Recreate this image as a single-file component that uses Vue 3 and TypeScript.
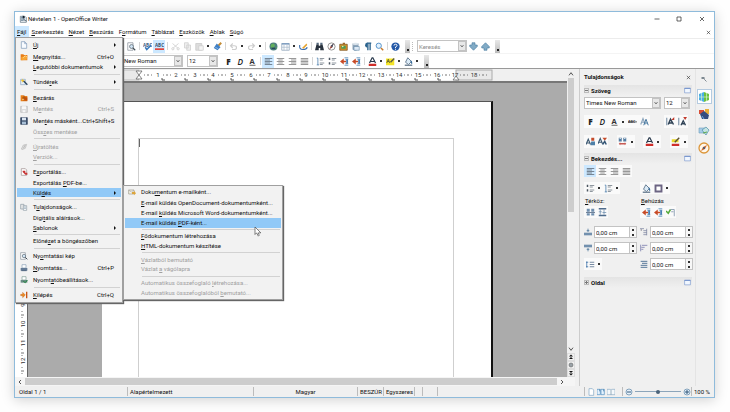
<script setup lang="ts">
import { h, ref } from 'vue'

const icons: Record<string, string> = {
  app: '<path d="M2 2h7l2 2v7H2z" fill="#eef3f7" stroke="#56697a"/><path d="M3 4h5M3 6h6M3 8h4" stroke="#34536e"/><path d="M6 1v4l3-2M7 7l4 2" stroke="#263b4c"/>',
  file: '<path d="M2 1h5l3 3v7H2z" fill="#f8fbff" stroke="#7a96b5"/><path d="M7 1v3h3" fill="none" stroke="#7a96b5"/>',
  open: '<path d="M1 2h4l1 1h5v8H1z" fill="#e77b15"/><path d="M2 6l9-2-1 6-8 1z" fill="#f7a534"/><path d="M5 7l3-3 2 2" stroke="#fff3c0" fill="none"/>',
  wizard: '<path d="M1 2h7v8H1z" fill="#e9f2fb" stroke="#86a1bb"/><path d="M5 4l6 6" stroke="#27425b" stroke-width="2"/><path d="M4 1l1 2 2 1-2 1-1 2-1-2-2-1 2-1z" fill="#f2c230"/>',
  close: '<path d="M1 2h4l1 1h5v8H1z" fill="#e8801a"/><path d="M6 2v8M3 6h6" stroke="#8b3d08" stroke-width="1"/><path d="M7 5h4v5H7z" fill="#c14f10"/><path d="M3 8h3" stroke="#ffe6ae"/>',
  saveoff: '<path d="M1 2h10v9H1z" fill="#dcdcdc" stroke="#b9b9b9"/><path d="M3 2h6v4H3zM4 8h4v3H4z" fill="#f7f7f7"/>',
  save: '<path d="M1 1h10v10H1z" fill="#3d526e" stroke="#2c3d58"/><path d="M3 1h6v4H3z" fill="#dbe5f1"/><path d="M3 7h6v4H3z" fill="#a8bfd6"/>',
  reload: '<path d="M2 9l3-6 5-1-2 6-5 2z" fill="#ddd" stroke="#bbb"/><path d="M5 8l3-5" stroke="#aaa"/>',
  export: '<path d="M2 1h6l2 2v8H2z" fill="#fff" stroke="#9b8b8b"/><path d="M4 4h4v3h3v3H8L4 6z" fill="#c73333"/>',
  props: '<path d="M1 2h5v7H1z" fill="#e9e9e9" stroke="#8b98a3"/><path d="M5 4h5v7H5z" fill="#fff" stroke="#8b98a3"/><path d="M6 6h3M6 8h3" stroke="#8097ab"/>',
  preview: '<path d="M1 1h7v10H1z" fill="#fff" stroke="#89929c"/><circle cx="6" cy="6" r="2.6" fill="#d2e5f5" stroke="#5c6872"/><path d="M8 8l3 3" stroke="#414c55" stroke-width="1.5"/>',
  print: '<path d="M3 1h6v5H3z" fill="#fff" stroke="#8aa0b7"/><path d="M1 6h10v4H1z" fill="#647b96"/><path d="M2 10h8" stroke="#2c4664"/>',
  printset: '<path d="M3 1h6v5H3z" fill="#fff" stroke="#7d9b92"/><path d="M1 6h10v4H1z" fill="#6b8b86"/><path d="M5 8l3 2 3-4" fill="none" stroke="#22883f" stroke-width="1.5"/>',
  exit: '<path d="M9 1h2v10H9z" fill="#c75314"/><path d="M8 6L4 2v3H1v2h3v3z" fill="#f08b1e" stroke="#b3540e" stroke-width=".5"/>',
  mail: '<path d="M1 3h8v6H1z" fill="#f7f3e7" stroke="#9b9788"/><path d="M1 3l4 3 4-3" fill="none" stroke="#aaa"/><path d="M6 6h3V4l3 4-3 3V9H6z" fill="#dca53d"/>',
  spell: '<text x="0" y="6" font-size="6" font-weight="700" font-family="Open Sans" fill="#3a5d82">ABC</text><path d="M3 7l2 3 6-6" stroke="#3978bb" stroke-width="2" fill="none"/>',
  auto: '<text x="0" y="7" font-size="6" font-weight="700" font-family="Open Sans" fill="#33506d">ABC</text><path d="M0 9.500h12" stroke="#e22f22" stroke-width="2" fill="none"/>',
  cut: '<path d="M2 2l7 6M10 2L3 8" stroke="#c9c9c9"/><circle cx="2.5" cy="9" r="1.5" fill="none" stroke="#c9c9c9"/><circle cx="9.5" cy="9" r="1.5" fill="none" stroke="#c9c9c9"/>',
  copy: '<path d="M2 1h5v7H2zM5 4h5v7H5z" fill="#eee" stroke="#cdcdcd"/>',
  paste: '<path d="M1 2h8v9H1z" fill="#ddd" stroke="#c8c8c8"/><path d="M5 5h6v6H5z" fill="#f4f4f4" stroke="#ccc"/>',
  brush: '<path d="M11 1L7 5" stroke="#c38b35" stroke-width="2.500"/><path d="M5 2l5 5-4 4-5-3z" fill="#3f7fc4"/><path d="M3 7l4 2" stroke="#9fc6ee"/>',
  undo: '<path d="M2 5h5q3 0 3 2.500T7 10H4M5 2L2 5l3 3" fill="none" stroke="#cdcdcd" stroke-width="1.5"/>',
  redo: '<path d="M10 5H5Q2 5 2 7.500T5 10h3M7 2l3 3-3 3" fill="none" stroke="#cdcdcd" stroke-width="1.5"/>',
  globe: '<circle cx="6" cy="6" r="5.300" fill="#4e7f81"/><path d="M3 3l3-1 2 2-1 3-3 1-2-2zM8 8l2-2v3z" fill="#63b05d"/><path d="M3.500 8.500h5" stroke="#24485c" stroke-width="2"/>',
  table: '<path d="M1 2h10v9H1z" fill="#fff" stroke="#8fa4ba"/><path d="M1 2.500h10" stroke="#7c9cbf" stroke-width="2"/><path d="M4 4v7M8 4v7M1 7h10" stroke="#a8bacb"/>',
  pencil: '<path d="M1 4q-1 6 4 6t6-3" fill="none" stroke="#3e70af" stroke-width="1.5"/><path d="M4 8l6-6 1 2-5 5z" fill="#e6a22b"/>',
  binoc: '<path d="M2 3h3v2h2V3h3l2 8H7V8H5v3H0z" fill="#29333f"/><path d="M2 1h3v2H2zM7 1h3v2H7z" fill="#546a80"/>',
  compass: '<circle cx="6" cy="6" r="4.800" fill="#fff" stroke="#777"/><path d="M9 2L7 7 3 10l2-5z" fill="#9c4d45"/><path d="M9 2L7 7 5 5z" fill="#3b4f66"/>',
  gallery: '<path d="M1 3h10v8H1z" fill="#dc9428" stroke="#7a501b"/><path d="M3 5h6v4H3z" fill="#4f9a55"/><path d="M5 1h3v2H5z" fill="#9b6527"/><circle cx="5" cy="6" r="1" fill="#eef6b7"/>',
  db: '<path d="M2 2h8v8q-4 3-8 0z" fill="#90a6ba"/><ellipse cx="6" cy="2.500" rx="4" ry="1.500" fill="#dce5ec"/><path d="M4 6h7v5H4z" fill="#dce9f5" stroke="#557c9e" stroke-width=".7"/>',
  pilcrow: '<path d="M6.500 1v10M9.500 1v10M11 1.500H5" stroke="#2b638e" stroke-width="1.800"/><path d="M6 1a3.300 3.300 0 0 0 0 6.600z" fill="#2b638e"/>',
  zoom: '<circle cx="5" cy="5" r="3.500" fill="#e2f2ff" stroke="#5793c8" stroke-width="1.300"/><path d="M8 8l3 3" stroke="#c8792a" stroke-width="2"/>',
  help: '<circle cx="6" cy="6" r="5.500" fill="#2459a7"/><path d="M4 4.800Q4 3 6 3t2 1.700Q8 6 6 6.700V8" fill="none" stroke="#fff" stroke-width="1.300"/><path d="M5.400 9h1.300v1.300H5.400z" fill="#fff"/>',
  down: '<path d="M4 1h4v3h3v2l-5 5-5-5V4h3z" fill="#82abc6" stroke="#44799f" stroke-width=".8"/>',
  up: '<path d="M4 11h4V8h3V6L6 1 1 6v2h3z" fill="#82abc6" stroke="#44799f" stroke-width=".8"/>',
  left: '<path d="M1 2h10M1 4h7M1 6h10M1 8h7M1 10h10" stroke="#5b6671"/>',
  center: '<path d="M1 2h10M3 4h6M1 6h10M3 8h6M1 10h10" stroke="#777"/>',
  right: '<path d="M1 2h10M4 4h7M1 6h10M4 8h7M1 10h10" stroke="#777"/>',
  justify: '<path d="M1 2h10M1 4h10M1 6h10M1 8h10M1 10h10" stroke="#777"/>',
  numlist: '<path d="M5 2h6M5 4h4M5 8h6M5 10h4" stroke="#6b7680"/><path d="M1 1.500h1.500v9M1 10.500h3" fill="none" stroke="#4176a8"/>',
  bullist: '<path d="M5 2h6M5 4h4M5 8h6M5 10h4" stroke="#6b7680"/><path d="M1 1h2v3H1zM1 7h2v3H1z" fill="#4b555f"/>',
  outdent: '<path d="M6 1h5M7 3h4M7 9h4M6 11h5" stroke="#4a80b3"/><path d="M8 5H5V2L0 6l5 4V7h3z" fill="#c74a26"/><path d="M9.500 3v6" stroke="#4a80b3" stroke-width="2.500"/>',
  font: '<path d="M2 8L5.500 1h1L10 8M3.500 6h5" stroke="#28384b" stroke-width="1.600" fill="none"/><path d="M1 9h10v3H1z" fill="#cf2d29"/>',
  mark: '<path d="M0 2h11v9H0z" fill="#f5e528"/><path d="M1 8l2-5 2 5M2 6h2" stroke="#4b4c2f" fill="none"/><path d="M6 7l5-5" stroke="#5a5b46" stroke-width="2"/>',
  mark2: '<path d="M1 3h9v4H1z" fill="#ead92a"/><path d="M5 7l6-6" stroke="#5a4f35" stroke-width="2"/><path d="M1 9h10v3H1z" fill="#cf2d29"/>',
  fill: '<path d="M2 7l3-6 5 5-4 4z" fill="#dcebf7" stroke="#455f77"/><path d="M9 5q2 3 1 4" stroke="#2c6699" stroke-width="1.500" fill="none"/><path d="M1 11h10" stroke="#76889a" stroke-width="2"/>',
  strike: '<text x="0" y="8" font-size="5" font-weight="700" font-family="Open Sans" fill="#444">ABC</text><path d="M0 6.500h12" stroke="#333"/>',
  shadow: '<path d="M1 10L4 2l3 8M2 7h4" stroke="#8da6bd" stroke-width="1.500" fill="none"/><path d="M5 11l3-8 3 8M6 8h4" stroke="#47779f" stroke-width="1.300" fill="none"/>',
  grow: '<path d="M1 1v10" stroke="#7d93a8" stroke-width="1.500"/><path d="M3 10l3-7 4 7M4 8h4" stroke="#2f4255" stroke-width="2" fill="none"/><path d="M7 4l4-4v4z" fill="#c0392b"/>',
  shrink: '<path d="M1 1v10" stroke="#7d93a8" stroke-width="1.500"/><path d="M4 11l3-6 3 6M5 9h4" stroke="#2f4255" stroke-width="1.700" fill="none"/><path d="M7 0h5L9.500 4z" fill="#c0392b"/>',
  sup: '<path d="M0 10l3-7 3 7M1 8h4" stroke="#3d5972" stroke-width="1.500" fill="none"/><path d="M7 1h4v4H7z" fill="#c44b2b"/><path d="M7 6h5v5H6z" fill="#4e80a8"/>',
  sub: '<path d="M0 9l3-7 3 7M1 7h4" stroke="#3d5972" stroke-width="1.500" fill="none"/><path d="M6 1h6L9 5z" fill="#c44b2b"/><path d="M6 10l3-4 2 4" stroke="#355777" stroke-width="2" fill="none"/>',
  spacing: '<path d="M1 1h4v5H1zM7 1h4v5H7z" fill="#547ca1"/><path d="M2 2h2M8 2h2" stroke="#fff"/><path d="M1 9l2-2v1h6V7l2 2-2 2v-1H3v1z" fill="#c75b55"/>',
  border: '<path d="M2 2h8v8H2z" fill="#fff" stroke="#6c6583" stroke-width="2.500"/>',
  paraup: '<path d="M1 1h4v4H1zM7 1h4v4H7zM1 7h4v3H1zM7 7h4v3H7z" fill="#6f8faf"/><path d="M0 6h12" stroke="#445b78"/>',
  paradown: '<path d="M1 1h10M1 10h10" stroke="#4e6b8c" stroke-width="2"/><path d="M3 2v7M8 2v7M1 5h4M6 6h5" stroke="#6f8faf"/>',
  hang: '<path d="M0 4l3 3 3-5" stroke="#55aa3a" stroke-width="2" fill="none"/><path d="M6 2h5v9M7 5h3" stroke="#738aa3" fill="none"/>',
  above: '<path d="M0 7h12v4H0z" fill="#7290ae"/><path d="M6 1v5M4 4h4" stroke="#35658e"/>',
  below: '<path d="M0 1h12v4H0z" fill="#7290ae"/><path d="M6 6v5M4 8h4" stroke="#35658e"/>',
  inbefore: '<path d="M0 1h6M10 1v10M5 4h5M5 7h5M5 10h5" stroke="#6c7695"/><path d="M1 3h2" stroke="#334"/>',
  inafter: '<path d="M1 1v10M3 2h8M2 5h5M2 8h3" stroke="#6267a0"/>',
  infirst: '<path d="M1 2h10M3 5h8M1 8h10M1 11h10" stroke="#58799b" stroke-width="1.500"/>',
  linesp: '<path d="M1 2v8M0 3h3M0 9h3" stroke="#366ba4"/><path d="M5 3h6M5 6h6M5 9h6" stroke="#687e98" stroke-width="1.200"/>',
  deck: '<path d="M5 4l2 3 4 4" stroke="#5d6974" stroke-width="1.500" fill="none"/><path d="M1 2h6v4H1z" fill="#7d8890"/>',
  cube: '<path d="M1 3l5-2v10l-5-2z" fill="#4aaee5"/><path d="M6 1l5 2v6l-5 2z" fill="#6cc13e"/><path d="M1 6h10M3.500 2v8M8.500 2v8" stroke="#d2efcd" stroke-width=".7"/>',
  styles: '<path d="M1 2h5v4H1z" fill="#d74e36"/><path d="M7 1h4v5H7z" fill="#e9af39"/><path d="M2 6l4-3 5 4-1 4H4z" fill="#354d80"/><path d="M4 8l2 3" stroke="#6aa6dd"/>',
  pics: '<path d="M1 3h6v5H1z" fill="#a7cbe8" stroke="#6b9fbb" stroke-width=".6"/><path d="M4 5l4-3 3 3-3 5z" fill="#c4e4e2" stroke="#4d8eaa" stroke-width=".7"/><path d="M5 8l4-1" stroke="#5fa94c"/>',
  nav: '<circle cx="6" cy="6" r="5" fill="#fff8ec" stroke="#dc963a" stroke-width="1.300"/><path d="M9 3L7 7 3 9l2-4z" fill="#cf6b36"/><circle cx="6" cy="6" r="1" fill="#35577a"/>',
  page1: '<path d="M3 1h5l2 2v8H3z" fill="#fff" stroke="#7ba3c3"/>',
  page2: '<path d="M0 2h5v8H0zM6 2h5v8H6z" fill="#e3f2fe" stroke="#4f8dbe"/><path d="M4 2v3M10 2v3" stroke="#306c9b"/>',
  book: '<path d="M0 2h5l1 1 1-1h5v8H0z" fill="#f4f8fb" stroke="#89a9c2"/><path d="M6 3v7" stroke="#6e8ba2"/>',
  minus: '<circle cx="6" cy="6" r="4.500" fill="#e5f1fb" stroke="#527b9f"/><path d="M3 6h6" stroke="#274d70" stroke-width="1.400"/>',
  plus: '<circle cx="6" cy="6" r="4.500" fill="#e5f1fb" stroke="#527b9f"/><path d="M3 6h6M6 3v6" stroke="#274d70" stroke-width="1.400"/>',
  chevup: '<path d="M3 8l3-4 3 4" fill="none" stroke="#555" stroke-width="1.500"/>',
  chevdown: '<path d="M3 4l3 4 3-4" fill="none" stroke="#555" stroke-width="1.500"/>',
  chevleft: '<path d="M8 2L4 6l4 4" fill="none" stroke="#444" stroke-width="1.800"/>',
  chevright: '<path d="M4 2l4 4-4 4" fill="none" stroke="#444" stroke-width="1.800"/>',
  dblup: '<path d="M6 1l4 4H2zM6 6l4 4H2z" fill="#111"/>',
  dbldown: '<path d="M6 11l4-4H2zM6 6l4-4H2z" fill="#111"/>',
  dot: '<circle cx="6" cy="6" r="4" fill="#9aa2a8" stroke="#555"/>',
  x: '<path d="M2 2l8 8M10 2l-8 8" stroke="#333" stroke-width="1.500"/>',
  min: '<path d="M1 6h10" stroke="#333" stroke-width="1.500"/>',
  max: '<path d="M2 2h8v8H2z" fill="none" stroke="#333" stroke-width="1.500"/>',
  more: '<path d="M1 2h10v8H1z" fill="#f1f7ff" stroke="#6f8fca"/><path d="M1 2.500h10" stroke="#6f8fca" stroke-width="1.500"/>',
  F: '<text x="3" y="10" font-size="11" font-weight="800" font-family="Open Sans" fill="#222">F</text>',
  D: '<text x="2" y="10" font-size="11" font-style="italic" font-weight="600" font-family="Open Sans" fill="#222">D</text>',
  A: '<text x="2" y="9" font-size="10" font-weight="700" font-family="Open Sans" fill="#333">A</text><path d="M2 11h8" stroke="#333"/>',
}

const Icon = (p: { n: string }) =>
  h('svg', { class: 'icon', viewBox: '0 0 12 12', 'aria-hidden': 'true', innerHTML: icons[p.n] })
Icon.props = ['n']

/* An underscore marks the accelerator letter that follows it. */
const Label = (p: { t: string }) => {
  const i = p.t.indexOf('_')
  return i < 0 ? h('span', p.t) : h('span', [p.t.slice(0, i), h('u', p.t[i + 1]), p.t.slice(i + 2)])
}
Label.props = ['t']

interface Item { t?: string; icon?: string; tall?: boolean; key?: string; off?: boolean; sub?: boolean; on?: boolean }
const sep: Item = {}
const fileMenu: Item[] = [
  { t: '_Új', icon: 'file', tall: true, sub: true },
  { t: '_Megnyitás...', icon: 'open', tall: true, key: 'Ctrl+O' },
  { t: '_Legutóbbi dokumentumok', sub: true },
  sep,
  { t: 'Tündé_rek', icon: 'wizard', tall: true, sub: true },
  sep,
  { t: '_Bezárás', icon: 'close', tall: true },
  { t: 'M_entés', icon: 'saveoff', tall: true, key: 'Ctrl+S', off: true },
  { t: 'Men_tés másként...', icon: 'save', tall: true, key: 'Ctrl+Shift+S' },
  { t: 'Öss_zes mentése', off: true },
  sep,
  { t: '_Újratöltés', icon: 'reload', tall: true, off: true },
  { t: '_Verziók...', off: true },
  sep,
  { t: 'E_xportálás...', icon: 'export', tall: true },
  { t: 'Exportálás _PDF-be...' },
  { t: 'Kül_dés', sub: true, on: true },
  sep,
  { t: 'T_ulajdonságok...', icon: 'props', tall: true },
  { t: 'Digi_tális aláírások...' },
  { t: '_Sablonok', sub: true },
  sep,
  { t: 'Előné_zet a böngészőben' },
  sep,
  { t: 'Ny_omtatási kép', icon: 'preview', tall: true },
  { t: '_Nyomtatás...', icon: 'print', tall: true, key: 'Ctrl+P' },
  { t: 'Nyomt_atóbeállítások...', icon: 'printset', tall: true },
  sep,
  { t: '_Kilépés', icon: 'exit', tall: true, key: 'Ctrl+Q' },
]
const sendMenu: Item[] = [
  { t: 'Doku_mentum e-mailként...', icon: 'mail', tall: true },
  { t: '_E-mail küldés OpenDocument-dokumentumként...' },
  { t: 'E-mail _küldés Microsoft Word-dokumentumként...' },
  { t: 'E-mail küldés _PDF-ként...', on: true },
  sep,
  { t: '_Fődokumentum létrehozása' },
  { t: '_HTML-dokumentum készítése' },
  sep,
  { t: '_Vázlatból bemutató', off: true },
  { t: 'Vázlat _a vágólapra', off: true },
  sep,
  { t: 'Automatikus összefoglaló _létrehozása...', off: true },
  { t: 'Automatikus összefoglalóból _bemutató...', off: true },
]
const menus = ['_Szerkesztés', '_Nézet', '_Beszúrás', 'F_ormátum', '_Táblázat', '_Eszközök', '_Ablak', '_Súgó']

/* Toolbar tokens: "|" is a divider, "v" a drop-down mark, "*" a pressed button. */
const standard = 'preview | spell *auto | cut copy paste v brush | undo v redo v | globe table v pencil | binoc compass gallery db pilcrow zoom | help'.split(' ')
const formatting = 'F D A | *left center right justify | numlist bullist outdent outdent | font v mark v fill v'.split(' ')
const rows = {
  text1: [['F', 'D', 'A', 'v', 'strike', 'shadow'], ['grow', 'shrink']],
  text2: [['sup', 'sub'], ['spacing', 'v'], ['font', 'v'], ['mark2', 'v']],
  para: [['bullist', 'v', 'numlist', 'v'], ['fill', 'border', 'v']],
}
const spins = [
  { icon: 'above', label: 'Térköz' },
  { icon: 'inbefore', label: 'Behúzás' },
  { icon: 'below', label: 'Térköz' },
  { icon: 'inafter', label: 'Behúzás' },
]
const cm = 18.6
const origin = 111
const at = (n: number) => Math.round(origin + n * cm)
const down = (n: number) => Math.round(55 + n * cm)
const tabs = Array.from({ length: 13 }, (_, i) => origin + 23 * (i + 1))
const dots = Array.from({ length: 19 }, (_, i) => i)
const zoomLevel = ref(50)
const searchText = ref('')
</script>

<template>
  <main class="window">
    <header class="title">
      <Icon n="app" /><h1>Névtelen 1 - OpenOffice Writer</h1>
      <button aria-label="min"><Icon n="min" /></button>
      <button aria-label="max"><Icon n="max" /></button>
      <button aria-label="x"><Icon n="x" /></button>
    </header>

    <nav class="menubar">
      <div class="menu-root">
        <button class="menu-head open"><Label t="_Fájl" /></button>
        <div class="menu file" role="menu">
          <template v-for="(m, i) in fileMenu" :key="i">
            <hr v-if="!m.t">
            <div v-else class="row" :class="{ tall: m.tall }">
              <button class="item" role="menuitem" :class="{ on: m.on }" :disabled="m.off">
                <Icon v-if="m.icon" :n="m.icon" /><Label class="name" :t="m.t" />
                <kbd v-if="m.key">{{ m.key }}</kbd><i v-if="m.sub" class="arrow"></i>
              </button>
              <div v-if="m.on" class="menu send" role="menu">
                <template v-for="(s, j) in sendMenu" :key="j">
                  <hr v-if="!s.t">
                  <div v-else class="row" :class="{ tall: s.tall }">
                    <button class="item" role="menuitem" :class="{ on: s.on }" :disabled="s.off">
                      <Icon v-if="s.icon" :n="s.icon" /><Label class="name" :t="s.t" />
                    </button>
                  </div>
                </template>
                <svg class="cursor" viewBox="0 0 8 12"><path d="M1 0v9l2-2 2 4 1-1-1-3h3z" fill="#fff" stroke="#444" stroke-width=".8" /></svg>
              </div>
            </div>
          </template>
        </div>
      </div>
      <button v-for="m in menus" :key="m" class="menu-head"><Label :t="m" /></button>
      <button class="doc-close" aria-label="x"><Icon n="x" /></button>
    </nav>

    <div class="toolbar first">
      <template v-for="(t, i) in standard" :key="i">
        <i v-if="t === '|'" class="divider"></i><i v-else-if="t === 'v'" class="drop"></i>
        <button v-else class="tool" :class="{ pressed: t[0] === '*' }" :aria-label="t"><Icon :n="t.replace('*', '')" /></button>
      </template>
      <i class="overflow"></i><i class="grip"></i>
      <div class="combo search">
        <input v-model="searchText" aria-label="Keresés" placeholder="Keresés"><i class="pick"><Icon n="chevdown" /></i>
      </div>
      <button class="tool" aria-label="down"><Icon n="down" /></button>
      <button class="tool" aria-label="up"><Icon n="up" /></button>
      <i class="overflow"></i>
    </div>

    <div class="toolbar second">
      <div class="combo family"><select aria-label="Times New Roman"><option>Times New Roman</option></select><i class="pick"><Icon n="chevdown" /></i></div>
      <div class="combo size"><select aria-label="12"><option>12</option></select><i class="pick"><Icon n="chevdown" /></i></div>
      <template v-for="(t, i) in formatting" :key="i">
        <i v-if="t === '|'" class="divider"></i><i v-else-if="t === 'v'" class="drop"></i>
        <button v-else class="tool" :class="{ pressed: t[0] === '*' }" :aria-label="t"><Icon :n="t.replace('*', '')" /></button>
      </template>
      <i class="overflow"></i>
    </div>

    <div class="body">
      <section class="editor">
        <div class="hruler">
          <svg width="465" height="13">
            <rect x="0" y="1" width="111" height="10" fill="#e9e9e9" stroke="#bbb" />
            <rect x="111" y="1" width="317" height="10" fill="#fff" />
            <rect x="428" y="1" width="36" height="10" fill="#e9e9e9" stroke="#aaa" />
            <path v-for="d in dots" :key="'d' + d" :d="`M${at(d) + 5} 6h1m3 -1v2m3 -1h1`" stroke="#777" />
            <path v-for="x in tabs" :key="'t' + x" :d="`M${x} 9v2h3`" stroke="#555" fill="none" />
            <text v-for="n in 18" :key="n" :x="at(n)" y="8" text-anchor="middle">{{ n }}</text>
            <path d="M108 2h6l-3 4zM108 10h6l-3-4z" fill="#fff" stroke="#666" stroke-width=".8" />
            <path d="M425 11h6l-3-4z" fill="#fff" stroke="#666" stroke-width=".8" />
          </svg>
        </div>
        <div class="vruler">
          <svg width="14" height="296">
            <template v-for="n in 12" :key="n">
              <text x="0" y="0" :transform="`translate(10 ${down(n)}) rotate(-90)`" text-anchor="middle">{{ n }}</text>
              <path :d="`M7 ${down(n) + 6}v1m-1 3h3m-2 2v1`" stroke="#777" />
            </template>
          </svg>
        </div>
        <div class="workspace"><article class="page"><div class="textarea"></div></article></div>
        <div class="vscroll">
          <Icon n="chevup" /><div class="thumb"></div><div class="rest"></div>
          <Icon n="chevdown" />
          <button aria-label="dblup"><Icon n="dblup" /></button>
          <button aria-label="dot"><Icon n="dot" /></button>
          <button aria-label="dbldown"><Icon n="dbldown" /></button>
        </div>
        <div class="hscroll"><Icon n="chevleft" /><div class="thumb"></div><Icon n="chevright" /></div>
      </section>

      <aside class="sidebar">
        <div class="panel">
          <div class="panel-title"><h2>Tulajdonságok</h2><button aria-label="x"><Icon n="x" /></button></div>
          <div class="section-head"><i class="fold"></i><h3>Szöveg</h3><Icon n="more" /></div>
          <div class="section text">
            <div class="line">
              <div class="combo wide"><select aria-label="Times New Roman"><option>Times New Roman</option></select><i class="pick"><Icon n="chevdown" /></i></div>
              <div class="combo narrow"><select aria-label="12"><option>12</option></select><i class="pick"><Icon n="chevdown" /></i></div>
            </div>
            <div v-for="(r, k) in [rows.text1, rows.text2]" :key="k" class="line spread">
              <div v-for="(g, i) in r" :key="i" class="group">
                <template v-for="(t, j) in g" :key="j">
                  <i v-if="t === 'v'" class="drop"></i>
                  <button v-else class="tool" :aria-label="t"><Icon :n="t" /></button>
                </template>
              </div>
            </div>
          </div>
          <div class="section-head"><i class="fold"></i><h3>Bekezdés...</h3><Icon n="more" /></div>
          <div class="section para">
            <div class="line">
              <div class="group">
                <button v-for="a in ['left', 'center', 'right', 'justify']" :key="a" class="tool" :class="{ pressed: a === 'left' }" :aria-label="a"><Icon :n="a" /></button>
              </div>
            </div>
            <div class="line halves lists">
              <div v-for="(g, i) in rows.para" :key="i" class="group">
                <template v-for="(t, j) in g" :key="j">
                  <i v-if="t === 'v'" class="drop"></i>
                  <button v-else class="tool" :aria-label="t"><Icon :n="t" /></button>
                </template>
              </div>
            </div>
            <div class="line halves captions"><span><Label t="_Térköz:" /></span><span><Label t="_Behúzás" /></span></div>
            <div class="line halves">
              <div class="group"><button v-for="t in ['paraup', 'paradown']" :key="t" class="tool" :aria-label="t"><Icon :n="t" /></button></div>
              <div class="group"><button v-for="(t, i) in ['outdent', 'outdent', 'hang']" :key="i" class="tool" :aria-label="t"><Icon :n="t" /></button></div>
            </div>
            <div class="spins">
              <label v-for="(s, i) in spins" :key="i" class="spin">
                <Icon :n="s.icon" /><input :aria-label="s.label" value="0,00 cm"><i class="steps"></i>
              </label>
              <div class="group"><button class="tool" aria-label="linesp"><Icon n="linesp" /></button><i class="drop"></i></div>
              <label class="spin"><Icon n="infirst" /><input aria-label="Behúzás" value="0,00 cm"><i class="steps"></i></label>
            </div>
          </div>
          <div class="section-head"><i class="fold closed"></i><h3>Oldal</h3><Icon n="more" /></div>
        </div>
        <div class="tabs">
          <button v-for="t in ['deck', 'cube', 'styles', 'pics', 'nav']" :key="t" :class="{ current: t === 'cube' }" :aria-label="t"><Icon :n="t" /></button>
        </div>
      </aside>
    </div>

    <footer class="status">
      <span class="c-page">Oldal 1 / 1</span><span class="c-style">Alapértelmezett</span>
      <span class="c-lang">Magyar</span><span class="c-ins">BESZÚR</span><span class="c-sel">Egyszeres</span>
      <span class="c-a"></span><span class="c-b"></span><span class="c-rest"></span>
      <span class="c-view"><Icon n="page1" /><Icon n="page2" /><Icon n="book" /></span>
      <span class="c-zoom"><Icon n="minus" /><input v-model="zoomLevel" type="range" aria-label="100 %"><Icon n="plus" /></span>
      <span class="c-pct">100 %</span>
    </footer>
  </main>
</template>

<style>
body { background: #fefefe; }
</style>

<style scoped>
* { box-sizing: border-box; }
.window {
  display: flex;
  flex-direction: column;
  height: calc(100vh - 25px);
  margin: 11px 15px 14px 14px;
  border: 1px solid #8fbbdb;
  background: #fff;
  box-shadow: 0 2px 12px rgba(0, 0, 0, .18);
  color: #111;
  font: 6px/10px Roboto, "Open Sans", sans-serif;
}
button, input, select { font: inherit; color: inherit; margin: 0; padding: 0; border: 0; background: none; border-radius: 0; }
h1, h2, h3 { margin: 0; font: inherit; }
u { text-decoration-thickness: 1px; text-underline-offset: 1px; }
.icon { display: block; flex: none; width: 8px; height: 8px; }

.title { display: flex; align-items: center; height: 14px; padding: 0 8px 0 4px; }
.title h1 { flex: 1; margin-left: 1px; }
.title button { width: 22px; height: 12px; display: grid; place-items: center; }
.title button .icon { width: 6px; height: 6px; }
.title button:last-child { width: 8px; margin-left: 8px; }

.menubar { display: flex; height: 12px; }
.menu-root { position: relative; }
.menu-head { height: 12px; padding: 0 3px 0 2px; white-space: nowrap; }
.menu-head.open { background: #cce8ff; }
.doc-close { margin: 0 3px 0 auto; }
.doc-close .icon { width: 5px; height: 5px; }

.menu {
  position: absolute;
  z-index: 5;
  display: flex;
  flex-direction: column;
  padding: 1px;
  background: #f2f2f2;
  border: 1px solid #a0a0a0;
  box-shadow: 1px 1px 1px #666;
}
.menu.file { top: 11px; left: 0; width: 108px; height: 266px; }
.menu.send { top: -3px; left: 106px; width: 160px; height: 115px; }
.row { position: relative; flex: 10 1 0; min-height: 0; }
.row.tall { flex-grow: 12; }
.item { position: relative; display: flex; align-items: center; width: 100%; height: 100%; padding: 0 7px 0 3px; text-align: left; white-space: nowrap; }
.item .name { flex: 1; }
.item > .name:first-child { padding-left: 13px; }
.item .icon + .name { padding-left: 5px; }
.item.on { background: #91c9f7; }
.item:disabled { color: #a0a0a0; }
.item kbd { font: inherit; }
.arrow { border: solid transparent; border-width: 2px 0 2px 2px; border-left-color: #111; margin-right: -2px; }
.menu hr { flex: 4 1 0; min-height: 0; width: calc(100% - 18px); margin: 0 0 0 17px; border: 0; background: linear-gradient(#d2d2d2, #d2d2d2) center / 100% 1px no-repeat; }
.cursor { position: absolute; right: 21px; bottom: 62px; width: 7px; height: 10px; }

.toolbar { display: flex; align-items: center; height: 15px; border-top: 1px solid #ececec; }
.toolbar.first { padding-left: 110px; }
.toolbar.second { padding-left: 89px; border-top-color: #f4f4f4; }
.tool { display: grid; place-items: center; width: 12px; height: 12px; flex: none; }
.tool.pressed { background: #cce8ff; }
.toolbar .icon { width: 9px; height: 9px; }
.toolbar .tool { height: 13px; }
.divider { width: 1px; height: 8px; margin: 0 1px 0 2px; background: #d6d6d6; flex: none; }
.drop { flex: none; width: 6px; height: 2px; background: linear-gradient(#333, #333) center / 2px 2px no-repeat; }
.overflow { width: 5px; height: 13px; margin-left: 4px; background: linear-gradient(#222, #222) 2px 9px / 2px 2px no-repeat, linear-gradient(#e8e8e8, #bbb); flex: none; }
.grip { width: 2px; height: 9px; margin: 0 3px 0 2px; border-left: 1px dotted #bbb; }

.combo { position: relative; display: flex; height: 12px; border: 1px solid #c3c3c3; background: #fff; flex: none; }
.combo select, .combo input { flex: 1; width: 0; height: 100%; padding-left: 1px; appearance: none; outline: 0; }
.combo input::placeholder { color: #8a8a8a; opacity: 1; }
.pick { display: grid; place-items: center; width: 8px; background: #e8e8e8; border: 1px solid #c3c3c3; pointer-events: none; }
.pick .icon { width: 6px; height: 6px; }
.family { width: 79px; }
.size { width: 31px; margin: 0 4px; }
.search { width: 50px; }

.body { display: flex; flex: 1; min-height: 0; border-top: 1px solid #999; }
.editor { display: grid; grid-template: 14px 1fr 9px / 13px 1fr 8px; flex: 1; min-width: 0; background: #f0f0f0; }
.hruler { grid-column: 1 / 3; border-bottom: 2px solid #777; overflow: hidden; display: flex; justify-content: flex-end; padding-right: 74px; }
.hruler svg, .vruler svg { display: block; flex: none; }
.hruler text, .vruler text { font-size: 6px; fill: #333; }
.vruler { grid-area: 2 / 1; overflow: hidden; background: #fff; border-right: 1px solid #666; }
.workspace { grid-area: 2 / 2; display: flex; justify-content: center; padding-top: 18px; background: #ababab; overflow: hidden; }
.page { width: 391px; padding: 36px 37px 0 36px; background: #fff; border: solid #555; border-width: 1px 2px 0 0; border-right-color: #111; }
.textarea { height: 100%; border: 1px solid #cfcfcf; border-bottom: 0; background: linear-gradient(#666, #666) 0 0 / 1px 8px no-repeat; }
.vscroll { grid-area: 1 / 3 / 3 / 4; display: flex; flex-direction: column; align-items: center; padding-top: 1px; }
.vscroll .thumb { width: 6px; flex: 1; background: #cdcdcd; }
.vscroll .rest { flex: 1; }
.vscroll button { width: 8px; height: 8px; display: grid; place-items: center; border: 1px solid #ddd; }
.vscroll button .icon { width: 6px; height: 6px; }
.hscroll { grid-area: 3 / 1 / 4 / 4; display: flex; align-items: center; padding-right: 8px; background: #f5f5f5; }
.hscroll .icon { width: 6px; height: 6px; margin: 0 2px; }
.hscroll .thumb { flex: 1; height: 7px; background: #cdcdcd; }

.sidebar { display: flex; width: 139px; padding-left: 4px; background: #f0f0f0; }
.panel { flex: 1; min-width: 0; padding: 0 3px 0 4px; border-left: 1px solid #ccc; }
.panel-title { display: flex; align-items: center; justify-content: space-between; height: 16px; padding: 0 1px 0 0; font-weight: 700; }
.panel-title .icon { width: 5px; height: 5px; }
.section-head { display: flex; align-items: center; gap: 2px; height: 11px; padding: 0 1px 0 0; font-weight: 700; background: linear-gradient(#e4e4e4, #f0f0f0); }
.section-head h3 { flex: 1; }
.section-head .icon { width: 7px; height: 7px; }
.fold { width: 5px; height: 5px; border: 1px solid #bbb; background: linear-gradient(#777, #777) center / 3px 1px no-repeat; }
.fold.closed { background: linear-gradient(#777, #777) center / 3px 1px no-repeat, linear-gradient(#777, #777) center / 1px 3px no-repeat; }
.section { padding: 1px 2px 0 0; }
.line { display: flex; gap: 3px; }
.line.spread { justify-content: space-between; margin-top: 6px; padding-right: 2px; }
.line.spread + .line.spread { margin-top: 7px; }
.section.text { padding-bottom: 5px; }
.wide { flex: 1; }
.narrow { width: 26px; }
.group { display: flex; align-items: center; height: 13px; background: #fafafa; }
.panel .tool .icon { width: 9px; height: 9px; }
.halves { display: grid; grid-template-columns: 56px 1fr; gap: 0; justify-items: start; }
.lists { margin-top: 5px; }
.captions { margin-top: 2px; padding-left: 1px; }
.section.para { padding-top: 1px; padding-bottom: 7px; }
.section.para .group { height: 12px; }
.spins { display: grid; grid-template-columns: 53px 1fr; gap: 4px 3px; justify-items: start; margin-top: 8px; }
.spin { display: flex; align-items: center; width: 53px; height: 12px; }
.spin input { flex: 1; width: 0; height: 12px; margin-left: 2px; padding-left: 1px; border: 1px solid #c3c3c3; background: #fff; }
.steps { width: 7px; height: 12px; border: 1px solid #c3c3c3; border-left: 0; background: linear-gradient(#333, #333) 2px 2px / 2px 2px no-repeat, linear-gradient(#333, #333) 2px 7px / 2px 2px no-repeat, #f7f7f7; }
.tabs { display: flex; flex-direction: column; align-items: center; gap: 2px; width: 19px; padding: 2px 2px 0 0; border-left: 1px solid #e4e4e4; }
.tabs button { display: grid; place-items: center; width: 15px; height: 15px; }
.tabs button:first-child .icon { width: 6px; height: 6px; }
.tabs .icon { width: 12px; height: 12px; }
.tabs .current { margin-top: 1px; border: 1px solid #b5cbe0; background: #fff; }

.status { display: flex; align-items: center; height: 11px; background: #f0f0f0; white-space: nowrap; }
.status span { display: flex; align-items: center; height: 9px; padding-left: 2px; border-left: 1px solid #bcbcbc; flex: none; }
.status .c-page { width: 112px; padding-left: 4px; border: 0; }
.status .c-style { width: 126px; }
.status .c-lang { width: 104px; padding: 0; justify-content: center; }
.status .c-ins { width: 26px; }
.status .c-sel { width: 31px; }
.status .c-a { width: 8px; }
.status .c-b { width: 15px; }
.status .c-rest { flex: 1; }
.status .c-view { width: 38px; gap: 2px; }
.status .c-zoom { width: 69px; }
.status .c-pct { width: 23px; }
.c-zoom input { flex: 1; width: 0; height: 8px; margin: 0 2px; appearance: none; background: linear-gradient(#8ca5ba, #8ca5ba) center / 100% 1px no-repeat; }
.c-zoom input::-webkit-slider-thumb { appearance: none; width: 4px; height: 4px; border-radius: 2px; background: #4a6379; }
</style>
